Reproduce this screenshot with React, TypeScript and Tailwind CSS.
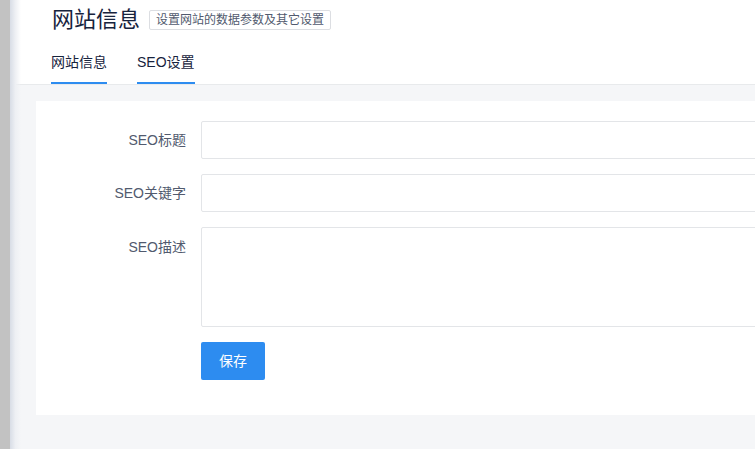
import React from "react";

export default function App() {
  const font = { fontFamily: '"Liberation Sans", "Noto Sans CJK SC", sans-serif' };
  return (
    <div className="flex w-[755px] h-[449px] overflow-hidden bg-[#f5f6f8]" style={font}>
      <div className="w-[10px] shrink-0 bg-[#c2c2c2]" />
      <div className="relative flex-1 flex flex-col min-w-0">
        <div className="pointer-events-none absolute left-0 top-0 bottom-0 w-[11px] bg-gradient-to-r from-[#d8dde6] via-[#eef0f4] to-transparent z-10" />
        <div className="bg-white border-b border-[#e8eaec] pl-[41px] shrink-0">
          <div className="flex items-center h-[38px] pt-[1px]">
            <h1 className="text-[22px] leading-none text-[#17233d] pl-[1px]">网站信息</h1>
            <span className="ml-[9px] border border-[#dcdee2] rounded-[2px] h-[20px] px-[6px] flex items-center text-[12px] text-[#515a6e] leading-none">设置网站的数据参数及其它设置</span>
          </div>
          <div className="flex gap-[30px] mt-[14px]">
            <div className="text-[14px] text-[#17233d] pb-[11px] border-b-[2px] border-[#2d8cf0] leading-[17px] pt-[2px]">网站信息</div>
            <div className="text-[14px] text-[#17233d] pb-[11px] border-b-[2px] border-[#2d8cf0] leading-[17px] pt-[2px]">SEO设置</div>
          </div>
        </div>
        <div className="pl-[26px] pt-[16px]">
          <div className="bg-white w-[800px] pt-[20px] pb-[35px]">
            <div className="flex items-center mb-[15px]">
              <label className="w-[150px] text-right text-[14px] text-[#515a6e]">SEO标题</label>
              <input className="ml-[15px] w-[600px] h-[38px] border border-[#e3e5e8] rounded-[2px] outline-none" />
            </div>
            <div className="flex items-center mb-[15px]">
              <label className="w-[150px] text-right text-[14px] text-[#515a6e]">SEO关键字</label>
              <input className="ml-[15px] w-[600px] h-[38px] border border-[#e3e5e8] rounded-[2px] outline-none" />
            </div>
            <div className="flex items-start mb-[15px]">
              <label className="w-[150px] text-right text-[14px] text-[#515a6e] pt-[10px]">SEO描述</label>
              <textarea className="ml-[15px] w-[600px] h-[100px] border border-[#e3e5e8] rounded-[2px] outline-none resize-none" />
            </div>
            <div className="pl-[165px]">
              <button className="w-[64px] h-[38px] bg-[#2d8cf0] text-white text-[14px] rounded-[2px]">保存</button>
            </div>
          </div>
        </div>
      </div>
    </div>
  );
}
